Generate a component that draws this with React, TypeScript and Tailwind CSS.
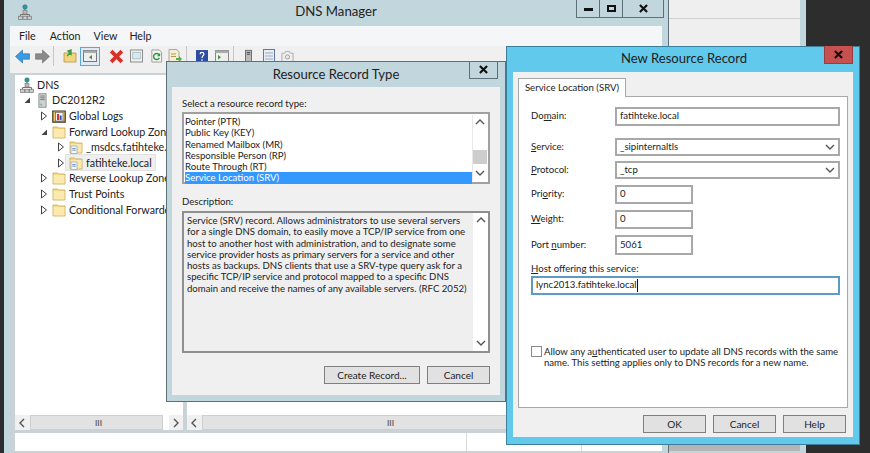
import type { ReactNode } from 'react';

const FONT = "font-['Lato',sans-serif]";

// Small chevron used by the scrollbars and combo boxes
function Chevron({ dir, className = '' }: { dir: 'up' | 'down' | 'left' | 'right'; className?: string }) {
  const paths = {
    up: 'M1 6 L5 2 L9 6',
    down: 'M1 3 L5 7 L9 3',
    left: 'M6 1 L2 5 L6 9',
    right: 'M3 1 L7 5 L3 9',
  };
  return (
    <svg viewBox="0 0 10 10" className={`w-[10px] h-[10px] ${className}`} fill="none" stroke="#555" strokeWidth="1.4">
      <path d={paths[dir]} />
    </svg>
  );
}

function CloseGlyph() {
  return (
    <svg viewBox="0 0 10 10" className="w-[9px] h-[9px]" fill="none" stroke="#111" strokeWidth="2.4">
      <path d="M1 1 L9 9 M9 1 L1 9" />
    </svg>
  );
}

function Folder({ doc = false }: { doc?: boolean }) {
  return (
    <svg viewBox="0 0 14 14" className="w-[14px] h-[14px] shrink-0">
      <path d="M1 2 H5.5 L6.5 3 H13 V13 H1 Z" fill="#f3d98a" stroke="#c9a94f" strokeWidth="0.8" />
      <rect x="1.6" y="4" width="10.8" height="8.4" fill="#fbe9ae" />
      {doc && (
        <>
          <rect x="2" y="6" width="6" height="7.5" fill="#f6f8fb" stroke="#8aa2c0" strokeWidth="0.7" />
          <path d="M3.2 8.5 H6.8 M3.2 10.2 H6.8" stroke="#5b83b8" strokeWidth="0.8" />
        </>
      )}
    </svg>
  );
}

function NetworkIcon() {
  return (
    <svg viewBox="0 0 14 16" className="w-[14px] h-[16px] shrink-0">
      <circle cx="7" cy="3" r="2.2" fill="#2f9a8f" stroke="#1f6f8a" strokeWidth="0.6" />
      <path d="M7 5 V9 M2.5 13 V10.5 H11.5 V13" fill="none" stroke="#777" strokeWidth="1" />
      <rect x="5" y="6.5" width="4" height="3.5" fill="#bbb" stroke="#777" strokeWidth="0.6" />
      <rect x="0.6" y="12.2" width="4" height="3.2" fill="#ccc" stroke="#777" strokeWidth="0.7" />
      <rect x="5" y="12.2" width="4" height="3.2" fill="#ccc" stroke="#777" strokeWidth="0.7" />
      <rect x="9.4" y="12.2" width="4" height="3.2" fill="#ccc" stroke="#777" strokeWidth="0.7" />
    </svg>
  );
}

function ServerIcon() {
  return (
    <svg viewBox="0 0 10 16" className="w-[9px] h-[15px] shrink-0">
      <rect x="1" y="0.5" width="8" height="15" fill="#cfd2d2" stroke="#777" strokeWidth="0.8" />
      <path d="M2.5 3 H7.5 M2.5 5 H7.5 M2.5 7 H7.5" stroke="#666" strokeWidth="0.9" />
      <rect x="2.5" y="11.5" width="2" height="2" fill="#7fb77f" />
    </svg>
  );
}

function LogsIcon() {
  return (
    <svg viewBox="0 0 14 14" className="w-[14px] h-[14px] shrink-0">
      <path d="M0.8 2 H13.2 V13.2 H0.8 Z" fill="#e8c866" stroke="#40351a" strokeWidth="1.2" />
      <rect x="3.5" y="3.5" width="7.5" height="8.5" fill="#f5f5f5" stroke="#555" strokeWidth="0.6" />
      <rect x="5" y="5" width="2" height="6" fill="#c33" />
      <rect x="7.6" y="6.5" width="2" height="4.5" fill="#35b" />
    </svg>
  );
}

function Expander({ open = false }: { open?: boolean }) {
  return open ? (
    <svg viewBox="0 0 8 8" className="w-[8px] h-[8px] shrink-0">
      <path d="M7 1.5 V7 H1.5 Z" fill="#444" />
    </svg>
  ) : (
    <svg viewBox="0 0 8 10" className="w-[8px] h-[10px] shrink-0">
      <path d="M1.5 1 L6.5 5 L1.5 9 Z" fill="#fff" stroke="#444" strokeWidth="1" />
    </svg>
  );
}

function TreeRow(props: { indent: string; icon: ReactNode; label: string; open?: boolean; noExpander?: boolean; selected?: boolean }) {
  return (
    <div className={`flex items-center h-[15.6px] whitespace-nowrap ${props.indent}`}>
      {!props.noExpander && <Expander open={props.open} />}
      <span className={`ml-[1px] pl-[3px] pr-[3px] flex items-center h-[15px] ${props.selected ? 'bg-[#efefef] outline outline-[#e2e2e2]' : ''}`}>
        <span className="w-[14px] shrink-0 flex items-center justify-center">{props.icon}</span>
        <span className="pl-[3px] text-[10.7px] text-[#222]">{props.label}</span>
      </span>
    </div>
  );
}

function HScroll({ grip, right = true }: { grip: string; right?: boolean }) {
  return (
    <div className="flex h-[15px] w-full bg-[#f0f0f0] items-stretch">
      <div className="w-[15px] flex items-center justify-center">
        <Chevron dir="left" />
      </div>
      <div className="flex-1 bg-[#e2e2e2] border border-[#cfcfcf] flex items-center">
        <span className={`text-[8px] leading-none font-bold text-[#666] ${grip}`}>III</span>
      </div>
      {right && (
        <>
          <div className="w-[6px] bg-white" />
          <div className="w-[14px] flex items-center justify-center">
            <Chevron dir="right" />
          </div>
        </>
      )}
    </div>
  );
}

function Toolbar() {
  return (
    <div className="h-[27px] bg-[#f0f0f0] flex items-center pl-[5px] pb-[7px]">
      <svg viewBox="0 0 14 14" className="w-[15px] h-[15px]">
        <path d="M7 1 L0.5 7 L7 13 V9.5 H13.5 V4.5 H7 Z" fill="#3d9be0" stroke="#1f6fb5" strokeWidth="0.6" />
      </svg>
      <svg viewBox="0 0 14 14" className="w-[15px] h-[15px] ml-[5px]">
        <path d="M7 1 L13.5 7 L7 13 V9.5 H0.5 V4.5 H7 Z" fill="#8a8a8a" stroke="#6f6f6f" strokeWidth="0.6" />
      </svg>
      <div className="w-px h-[20px] bg-[#c6c6c6] ml-[3px]" />
      <svg viewBox="0 0 14 14" className="w-[14px] h-[14px] ml-[9px]">
        <path d="M1 4 H13 V13 H1 Z" fill="#f0d67f" stroke="#b6963f" strokeWidth="0.8" />
        <path d="M4 7 L8 3 M8 1 V5 L5 2 Z" stroke="#3f9a3f" strokeWidth="1.4" fill="#4fae4f" />
      </svg>
      <div className="ml-[3px] w-[20px] h-[19px] bg-[#dcebf7] border border-[#5aa7d8] flex items-center justify-center">
        <svg viewBox="0 0 14 12" className="w-[14px] h-[12px]">
          <rect x="0.5" y="0.5" width="13" height="11" fill="#eee" stroke="#777" />
          <rect x="0.5" y="0.5" width="13" height="2.5" fill="#aaa" />
          <path d="M9 5 L6 7.2 L9 9.4 Z" fill="#3a9a3a" />
        </svg>
      </div>
      <svg viewBox="0 0 14 14" className="w-[15px] h-[15px] ml-[9px]">
        <path d="M2 2 L12 12 M12 2 L2 12" stroke="#d9302a" strokeWidth="3.4" />
      </svg>
      <svg viewBox="0 0 14 14" className="w-[13px] h-[14px] ml-[6px]">
        <rect x="0.5" y="0.5" width="13" height="13" fill="#eee" stroke="#888" />
        <rect x="3" y="3" width="8" height="7" fill="#dbe8f4" stroke="#8aa" strokeWidth="0.6" />
      </svg>
      <svg viewBox="0 0 14 14" className="w-[13px] h-[14px] ml-[7px]">
        <path d="M2 0.5 H10 L12.5 3 V13.5 H2 Z" fill="#f6f6f6" stroke="#999" />
        <path d="M10 9 A3.2 3.2 0 1 1 9.6 5.6" fill="none" stroke="#2f9a3f" strokeWidth="1.6" />
        <path d="M11 3.6 V7.4 H7.4 Z" fill="#2f9a3f" />
      </svg>
      <svg viewBox="0 0 14 14" className="w-[14px] h-[14px] ml-[5px]">
        <path d="M1 0.5 H9 L11 3 V13.5 H1 Z" fill="#f5eed2" stroke="#aaa" />
        <path d="M3 5 H8 M3 7.5 H8" stroke="#b09a55" />
        <path d="M8 9 H11 V7 L14 10 L11 13 V11 H8 Z" fill="#4db04d" />
      </svg>
      <div className="w-px h-[20px] bg-[#c6c6c6] ml-[4px]" />
      <svg viewBox="0 0 13 14" className="w-[12px] h-[13px] ml-[9px]">
        <rect width="13" height="14" fill="#2f4da0" />
        <path d="M4.5 4.5 C4.5 2 8.5 2 8.5 4.5 C8.5 6.5 6.5 6 6.5 8.5 M6.5 10 V11.5" fill="none" stroke="#fff" strokeWidth="1.4" />
      </svg>
      <svg viewBox="0 0 14 12" className="w-[14px] h-[12px] ml-[7px]">
        <rect x="0.5" y="0.5" width="13" height="11" fill="#eee" stroke="#888" />
        <rect x="0.5" y="0.5" width="13" height="2.5" fill="#aaa" />
        <path d="M3 5 L6 7.2 L3 9.4 Z" fill="#3a9a3a" />
      </svg>
      <div className="w-px h-[20px] bg-[#c6c6c6] ml-[4px]" />
      <svg viewBox="0 0 8 14" className="w-[7px] h-[14px] ml-[11px]">
        <rect x="0.5" y="0.5" width="7" height="13" fill="#bbb" stroke="#666" />
        <path d="M2 3 H6 M2 5 H6" stroke="#444" />
      </svg>
      <svg viewBox="0 0 12 14" className="w-[12px] h-[14px] ml-[11px]">
        <rect x="0.5" y="0.5" width="11" height="13" fill="#e8eef6" stroke="#5d78a8" />
        <path d="M2 4 H10 M2 7 H10 M2 10 H10" stroke="#9ab" />
      </svg>
      <svg viewBox="0 0 14 14" className="w-[13px] h-[14px] ml-[6px]">
        <path d="M1 4 H4 L5 2 H9 L10 4 H13 V13 H1 Z" fill="#eee" stroke="#aaa" />
        <circle cx="7" cy="8" r="2.2" fill="none" stroke="#999" />
      </svg>
    </div>
  );
}

function MainWindow() {
  return (
    <div className="absolute left-[4px] top-0 w-[665px] h-[453px] bg-[#c2d6dd] border-r border-[#5d7078] flex flex-col px-[6px]">
      <div className="h-[26px] shrink-0 relative flex items-center justify-center">
        <div className="absolute left-[8px] top-[4px]">
          <NetworkIcon />
        </div>
        <span className="text-[13.2px] text-[#222] -mt-[3px]">DNS Manager</span>
        <div className="absolute right-[-2px] top-0 flex h-[18px] bg-[#c2d6dd] border border-t-0 border-[#5d7078]">
          <div className="w-[23px] border-r border-[#5d7078] flex items-center justify-center">
            <div className="w-[9px] h-[3px] bg-[#111] mt-[2px]" />
          </div>
          <div className="w-[23px] border-r border-[#5d7078] flex items-center justify-center">
            <div className="w-[9px] h-[7px] border-2 border-[#111]" />
          </div>
          <div className="w-[40px] flex items-center justify-center">
            <CloseGlyph />
          </div>
        </div>
      </div>
      <div className="h-[20px] shrink-0 bg-[#f5f6f7] flex items-center text-[10.7px] text-[#222] pl-[9px]">
        <span>File</span>
        <span className="ml-[14px]">Action</span>
        <span className="ml-[13px]">View</span>
        <span className="ml-[12px]">Help</span>
      </div>
      <Toolbar />
      <div className="flex-1 min-h-0 bg-[#c9d2d6] pl-[5px] pt-[2px] flex flex-col">
        <div className="flex-1 min-h-0 flex gap-[4px]">
          <div className="w-[168px] bg-white flex flex-col">
            <div className="flex-1 overflow-hidden pt-[2px]">
              <TreeRow indent="pl-[1px]" noExpander icon={<NetworkIcon />} label="DNS" />
              <TreeRow indent="pl-[8px]" open icon={<ServerIcon />} label="DC2012R2" />
              <TreeRow indent="pl-[25px]" icon={<LogsIcon />} label="Global Logs" />
              <TreeRow indent="pl-[25px]" open icon={<Folder />} label="Forward Lookup Zones" />
              <TreeRow indent="pl-[42px]" icon={<Folder doc />} label="_msdcs.fatihteke.local" />
              <TreeRow indent="pl-[42px]" selected icon={<Folder doc />} label="fatihteke.local" />
              <TreeRow indent="pl-[25px]" icon={<Folder />} label="Reverse Lookup Zones" />
              <TreeRow indent="pl-[25px]" icon={<Folder />} label="Trust Points" />
              <TreeRow indent="pl-[25px]" icon={<Folder />} label="Conditional Forwarders" />
            </div>
            <HScroll grip="ml-[64px]" />
          </div>
          <div className="flex-1 bg-white flex flex-col">
            <div className="flex-1" />
            <HScroll grip="ml-[184px]" right={false} />
          </div>
        </div>
        <div className="h-[18px] shrink-0 mt-[3px] mb-[2px] bg-white flex">
          <div className="w-[452px] border-r border-[#d8d8d8]" />
          <div className="w-[115px] border-r border-[#d8d8d8]" />
        </div>
      </div>
    </div>
  );
}

function BehindWindow() {
  return (
    <div className="absolute left-[669px] top-0 w-[137px] h-[453px] bg-[#c2d6dd] pr-[6px] pb-[2px] flex flex-col">
      <div className="h-[19px] bg-[#efefef] border-b border-[#d2d2d2]" />
      <div className="flex-1 bg-[#efefef]" />
      <div className="h-[6px] bg-[#b4b4b4]" />
    </div>
  );
}

function DialogButton({ label, className = '' }: { label: string; className?: string }) {
  return (
    <div className={`h-[18px] bg-[#e1e1e1] border border-[#7f7f7f] flex items-center justify-center text-[10px] text-[#222] ${className}`}>
      {label}
    </div>
  );
}

const RECORD_TYPES = ['Pointer (PTR)', 'Public Key (KEY)', 'Renamed Mailbox (MR)', 'Responsible Person (RP)', 'Route Through (RT)'];

const DESCRIPTION = [
  'Service (SRV) record. Allows administrators to use several servers',
  'for a single DNS domain, to easily move a TCP/IP service from one',
  'host to another host with administration, and to designate some',
  'service provider hosts as primary servers for a service and other',
  'hosts as backups. DNS clients that use a SRV-type query ask for a',
  'specific TCP/IP service and protocol mapped to a specific DNS',
  'domain and receive the names of any available servers. (RFC 2052)',
];

function ResourceRecordType() {
  return (
    <div className="absolute left-[166px] top-[61px] w-[340px] h-[341px] bg-[#c2d6dd] border border-[#5d7078] flex flex-col px-[5px] pb-[6px]">
      <div className="h-[25px] shrink-0 relative flex items-center justify-center">
        <span className="text-[13.1px] text-[#222]">Resource Record Type</span>
        <div className="absolute right-[2px] top-[-1px] w-[29px] h-[18px] border border-t-0 border-[#5d7078] flex items-center justify-center">
          <CloseGlyph />
        </div>
      </div>
      <div className="flex-1 bg-[#f0f0f0] px-[10px] pt-[10px] flex flex-col text-[9.6px] text-[#222]">
        <div className="leading-[13px]">Select a resource record type:</div>
        <div className="mt-[2px] h-[72px] bg-white border-2 border-[#a0a0a0] flex p-px">
          <div className="flex-1 leading-[11.3px] pt-[1px]">
            {RECORD_TYPES.map((t) => (
              <div key={t}>{t}</div>
            ))}
            <div className="bg-[#3399ff] text-white leading-[11.6px]">Service Location (SRV)</div>
          </div>
          <div className="w-[15px] flex flex-col items-center justify-between border-l border-[#e8e8e8] py-[3px] relative">
            <Chevron dir="up" />
            <div className="absolute left-0 top-[35px] w-[14px] h-[14px] bg-[#cdcdcd]" />
            <Chevron dir="down" />
          </div>
        </div>
        <div className="mt-[11px] leading-[13px]">Description:</div>
        <div className="mt-[3px] h-[142px] bg-[#efefef] border-2 border-[#8f8f8f] flex">
          <div className="flex-1 min-w-0 pl-[3px] pt-[2px] leading-[11.3px] whitespace-nowrap">
            {DESCRIPTION.map((line) => (
              <div key={line}>{line}</div>
            ))}
          </div>
          <div className="w-[15px] shrink-0 bg-white flex flex-col items-center justify-between py-[3px]">
            <Chevron dir="up" />
            <Chevron dir="down" />
          </div>
        </div>
        <div className="mt-[13px] flex justify-end gap-[7px]">
          <DialogButton label="Create Record..." className="w-[96px]" />
          <DialogButton label="Cancel" className="w-[63px]" />
        </div>
      </div>
    </div>
  );
}

function FieldRow(props: { label: ReactNode; value: string; select?: boolean; small?: boolean; className?: string; height?: string }) {
  return (
    <div className={`flex items-center ${props.className ?? ''}`}>
      <div className="w-[84px] shrink-0">{props.label}</div>
      <div className={`${props.height ?? 'h-[19px]'} ${props.small ? 'w-[78px]' : 'w-[225px]'} bg-white border-2 border-[#a8a8a8] flex items-center justify-between pl-[3px] pr-[3px] shrink-0`}>
        <span>{props.value}</span>
        {props.select && <Chevron dir="down" />}
      </div>
    </div>
  );
}

function NewResourceRecord() {
  return (
    <div className="absolute left-[506px] top-[46px] w-[354px] h-[399px] bg-[#61c9ec] border border-[#3d7f99] flex flex-col px-[6px] pb-[7px]">
      <div className="h-[25px] shrink-0 relative flex items-center justify-center">
        <span className="text-[13.1px] text-[#222] ml-[2px] -mt-[2px]">New Resource Record</span>
        <div className="absolute right-0 top-[-1px] w-[29px] h-[18px] bg-[#c75050] border border-t-0 border-[#9b3c3c] flex items-center justify-center">
          <CloseGlyph />
        </div>
      </div>
      <div className="flex-1 bg-[#f0f0f0] px-[5px] pt-[6px] flex flex-col text-[9.6px] text-[#222]">
        <div className="w-[108px] h-[19px] bg-white border border-b-0 border-[#a8a8a8] flex items-center justify-center relative z-10 -mb-px">
          Service Location (SRV)
        </div>
        <div className="h-[312px] bg-white border border-[#a8a8a8] pl-[12px] pt-[10px]">
          <FieldRow label={<>Do<u>m</u>ain:</>} value="fatihteke.local" />
          <FieldRow className="mt-[12px]" select height="h-[18px]" label={<><u>S</u>ervice:</>} value="_sipinternaltls" />
          <FieldRow className="mt-[5px]" select height="h-[18px]" label={<><u>P</u>rotocol:</>} value="_tcp" />
          <FieldRow className="mt-[6px]" small label={<>Pri<u>o</u>rity:</>} value="0" />
          <FieldRow className="mt-[6px]" small label={<><u>W</u>eight:</>} value="0" />
          <FieldRow className="mt-[6px]" small height="h-[20px]" label={<>Port <u>n</u>umber:</>} value="5061" />
          <div className="mt-[7px] leading-[13px]"><u>H</u>ost offering this service:</div>
          <div className="mt-[1px] w-[309px] h-[19px] border-2 border-[#5b9bc4] flex items-center pl-[3px]">
            lync2013.fatihteke.local
            <span className="w-px h-[13px] bg-[#111]" />
          </div>
          <div className="mt-[51px] flex items-start">
            <div className="w-[11px] h-[11px] border border-[#888] bg-white shrink-0" />
            <div className="ml-[2px] leading-[11.4px] whitespace-nowrap">
              <div>Allow any a<u>u</u>thenticated user to update all DNS records with the same</div>
              <div>name. This setting applies only to DNS records for a new name.</div>
            </div>
          </div>
        </div>
        <div className="mt-[7px] pr-[2px] flex justify-end gap-[7px]">
          <DialogButton label="OK" className="w-[63px] border-[#4f94bd]" />
          <DialogButton label="Cancel" className="w-[63px]" />
          <DialogButton label="Help" className="w-[63px]" />
        </div>
      </div>
    </div>
  );
}

export default function App() {
  return (
    <div className={`relative w-[870px] h-[453px] overflow-hidden bg-[#2d2d2d] ${FONT}`}>
      <MainWindow />
      <BehindWindow />
      <ResourceRecordType />
      <NewResourceRecord />
    </div>
  );
}
